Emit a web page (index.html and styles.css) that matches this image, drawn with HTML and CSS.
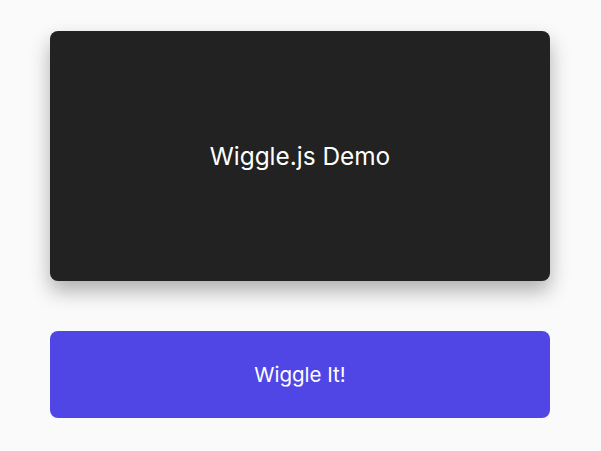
FILE: index.html
```
<!DOCTYPE html>
<html>
<head>
<meta charset="utf-8">
<link rel="stylesheet" href="styles.css">
</head>
<body>
<main class="wrap">
  <div class="card">Wiggle.js Demo</div>
  <button class="btn">Wiggle It!</button>
</main>
</body>
</html>
```
FILE: styles.css
```
html, body {
  margin: 0;
  padding: 0;
  background: #fafafa;
  font-family: Inter, "Noto Sans", sans-serif;
}
.wrap {
  width: 500px;
  margin: 31px 0 0 50px;
  display: flex;
  flex-direction: column;
  gap: 50px;
}
.card {
  height: 250px;
  background: #222222;
  border-radius: 8px;
  box-shadow: 0 10px 20px rgba(0, 0, 0, 0.3);
  color: #ffffff;
  font-size: 24.4px;
  display: flex;
  align-items: center;
  justify-content: center;
}
.btn {
  height: 87px;
  border: none;
  border-radius: 8px;
  background: #4f46e5;
  color: #ffffff;
  font-family: Inter, "Noto Sans", sans-serif;
  font-size: 20.5px;
  padding: 0;
  cursor: pointer;
}
```
